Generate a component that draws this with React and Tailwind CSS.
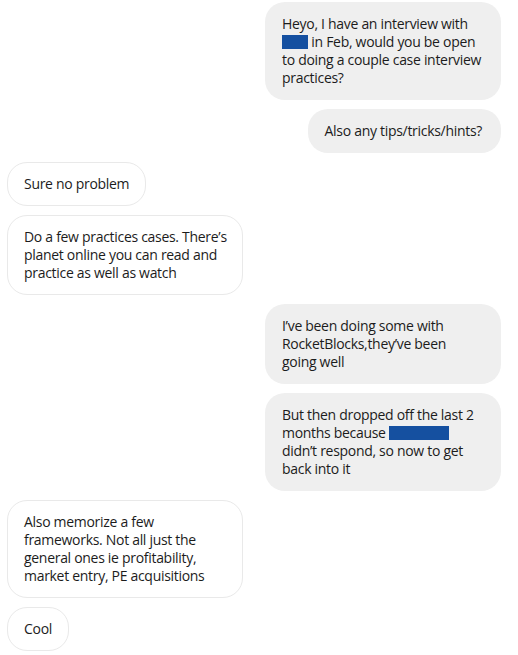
const Redacted = ({ w }) => (
  <span className={`inline-block h-[14px] bg-[#1550a0] align-[-2px] ${w}`}></span>
);

const messages = [
  {
    me: true,
    lines: [
      'Heyo, I have an interview with',
      <>
        <Redacted w="w-[26px]" /> in Feb, would you be open
      </>,
      'to doing a couple case interview',
      'practices?',
    ],
  },
  { me: true, lines: ['Also any tips/tricks/hints?'] },
  { me: false, lines: ['Sure no problem'] },
  {
    me: false,
    lines: [
      'Do a few practices cases. There\u2019s',
      'planet online you can read and',
      'practice as well as watch',
    ],
  },
  {
    me: true,
    lines: [
      'I\u2019ve been doing some with',
      'RocketBlocks,they\u2019ve been',
      'going well',
    ],
  },
  {
    me: true,
    lines: [
      'But then dropped off the last 2',
      <>
        months because <Redacted w="w-[60px]" />
      </>,
      'didn\u2019t respond, so now to get',
      'back into it',
    ],
  },
  {
    me: false,
    lines: [
      'Also memorize a few',
      'frameworks. Not all just the',
      'general ones ie profitability,',
      'market entry, PE acquisitions',
    ],
  },
  { me: false, lines: ['Cool'] },
];

export default function App() {
  return (
    <div
      className="w-[518px] h-[655px] bg-white pt-[2px] pl-[7px] pr-[17px] flex flex-col gap-[9px] text-[14px] leading-[18px] tracking-[-0.3px] text-[#1c1c1c] overflow-hidden"
      style={{ fontFamily: '"Open Sans", "Noto Sans", sans-serif' }}
    >
      {messages.map((m, i) => {
        const width = m.lines.length > 1 ? 'w-[236px]' : 'max-w-[236px]';
        return (
          <div key={i} className={`flex ${m.me ? 'justify-end' : 'justify-start'}`}>
            <div
              className={
                m.me
                  ? `${width} rounded-[20px] bg-[#efefef] pl-[17px] pr-[19px] py-[13px] whitespace-nowrap`
                  : `${width} rounded-[20px] bg-white border border-[#e9e9e9] px-[16px] py-[12px] whitespace-nowrap`
              }
            >
              {m.lines.map((l, j) => (
                <div key={j}>{l}</div>
              ))}
            </div>
          </div>
        );
      })}
    </div>
  );
}
